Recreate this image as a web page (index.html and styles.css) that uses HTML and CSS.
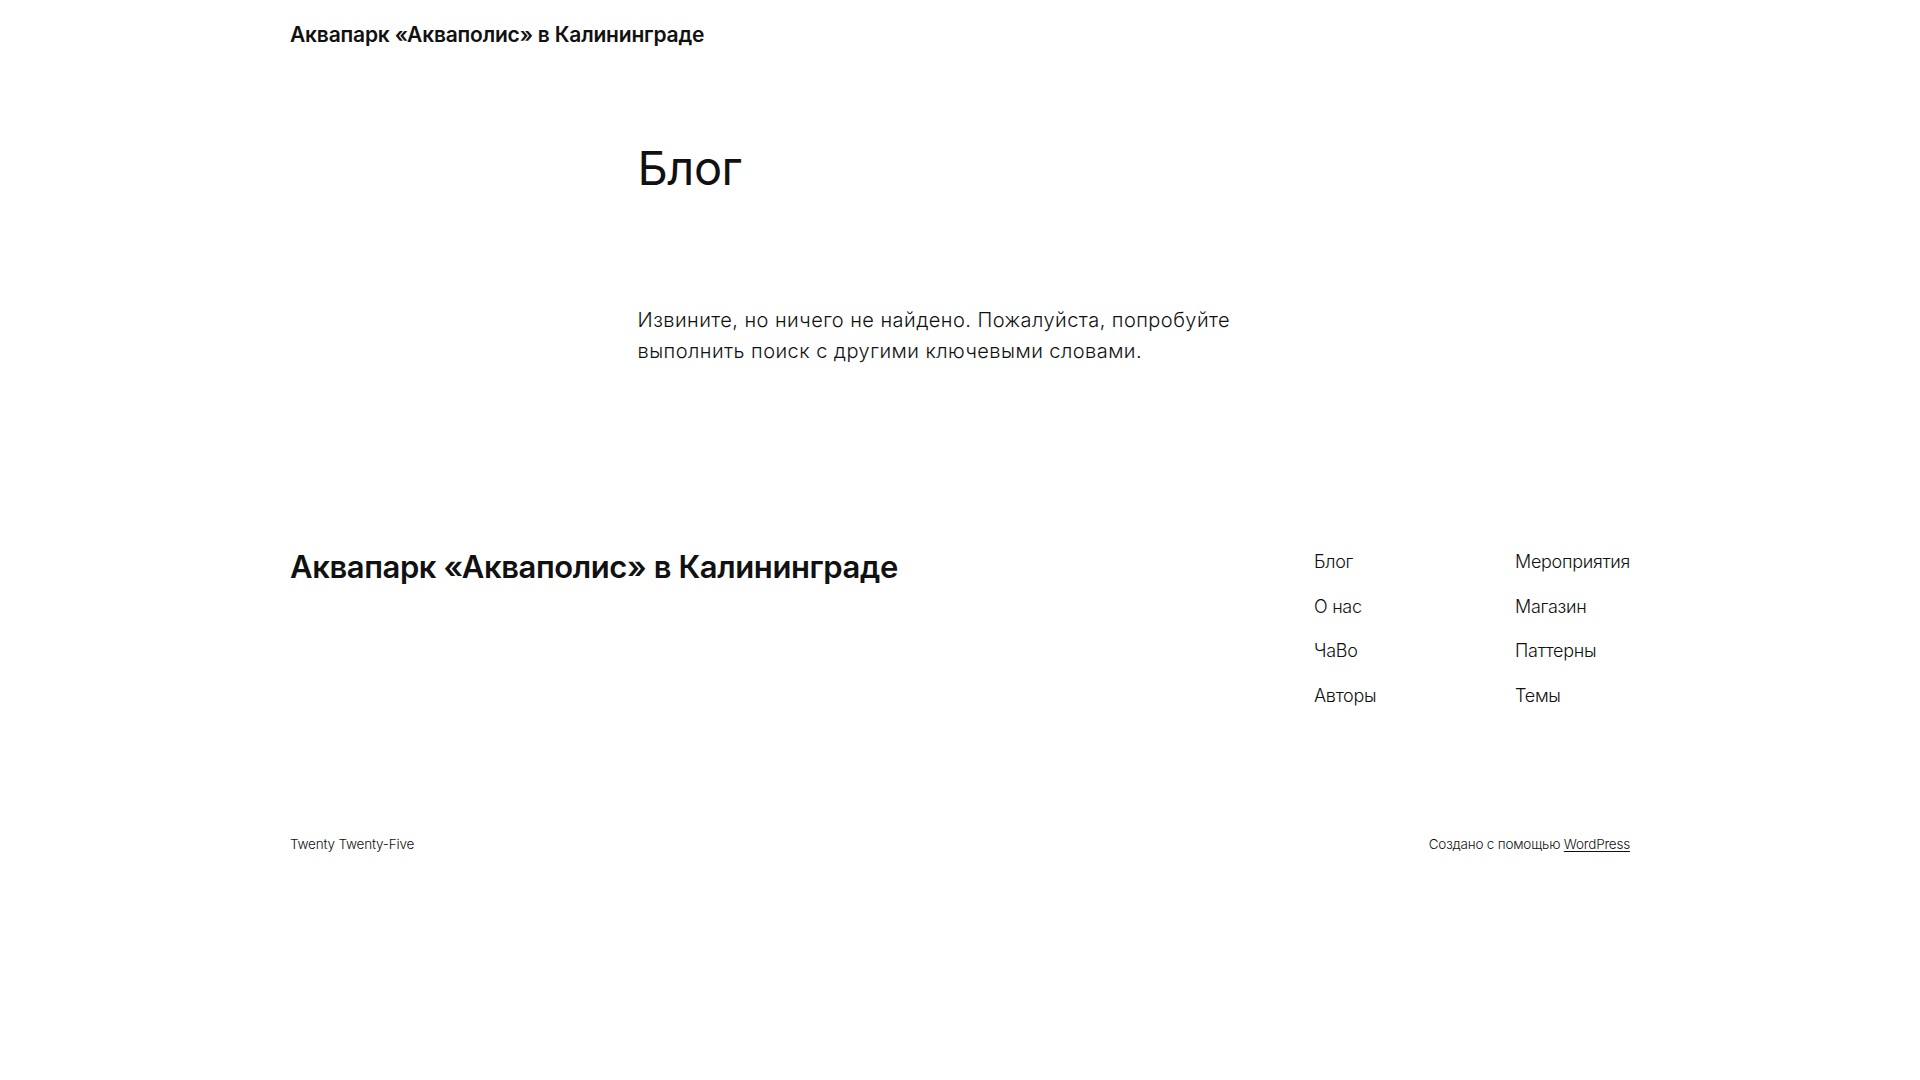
FILE: index.html
```html
<!DOCTYPE html>
<html lang="ru">
<head>
<meta charset="utf-8">
<title>Блог – Аквапарк «Акваполис» в Калининграде</title>
<link rel="stylesheet" href="styles.css">
</head>
<body>
<header class="site-header">
  <div class="wide">
    <a class="site-title" href="#">Аквапарк «Акваполис» в Калининграде</a>
  </div>
</header>
<main class="main">
  <div class="content">
    <h1 class="page-title">Блог</h1>
    <p class="no-results">Извините, но ничего не найдено. Пожалуйста, попробуйте выполнить поиск с другими ключевыми словами.</p>
  </div>
</main>
<footer class="site-footer">
  <div class="wide footer-top">
    <a class="footer-title" href="#">Аквапарк «Акваполис» в Калининграде</a>
    <nav class="footer-nav">
      <ul class="nav-col nav-col-first">
        <li><a href="#">Блог</a></li>
        <li><a href="#">О нас</a></li>
        <li><a href="#">ЧаВо</a></li>
        <li><a href="#">Авторы</a></li>
      </ul>
      <ul class="nav-col">
        <li><a href="#">Мероприятия</a></li>
        <li><a href="#">Магазин</a></li>
        <li><a href="#">Паттерны</a></li>
        <li><a href="#">Темы</a></li>
      </ul>
    </nav>
  </div>
  <div class="wide footer-bottom">
    <span>Twenty Twenty-Five</span>
    <span>Создано с помощью <a class="wp-link" href="#">WordPress</a></span>
  </div>
</footer>
</body>
</html>
```
FILE: styles.css
```css
* { box-sizing: border-box; }
html, body { margin: 0; padding: 0; background: #ffffff; }
body {
  font-family: Inter, "Noto Sans", sans-serif;
  color: #111111;
  font-weight: 300;
  -webkit-font-smoothing: antialiased;
}
a { color: inherit; text-decoration: none; }

.wide {
  width: 1340px;
  margin: 0 auto;
}

.site-header {
  height: 68px;
  padding-top: 2px;
  display: flex;
  align-items: center;
}
.site-header .wide { display: flex; }
.site-title {
  font-size: 21px;
  font-weight: 600;
  letter-spacing: -0.2px;
  line-height: 1.2;
}

.main { padding-top: 71px; }
.content {
  width: 645px;
  margin: 0 auto;
}
.page-title {
  margin: 0;
  font-size: 47px;
  font-weight: 400;
  line-height: 58px;
  letter-spacing: -0.5px;
}
.no-results {
  margin: 108px 0 0;
  font-size: 20px;
  line-height: 31px;
  letter-spacing: 0.45px;
  font-weight: 300;
}

.site-footer { padding-top: 182px; }
.footer-top {
  display: flex;
  justify-content: space-between;
  align-items: flex-start;
}
.footer-title {
  font-size: 31px;
  font-weight: 600;
  line-height: 36px;
  letter-spacing: -0.4px;
}
.footer-nav {
  display: flex;
  margin-top: -1px;
}
.nav-col {
  list-style: none;
  margin: 0;
  padding: 0;
  display: flex;
  flex-direction: column;
  gap: 17.5px;
}
.nav-col-first { width: 201px; }
.nav-col li {
  font-size: 18px;
  line-height: 27px;
  letter-spacing: -0.3px;
  font-weight: 300;
}

.footer-bottom {
  display: flex;
  justify-content: space-between;
  margin-top: 124px;
  font-size: 13.5px;
  line-height: 22px;
  letter-spacing: -0.2px;
  font-weight: 300;
}
.wp-link { text-decoration: underline; text-underline-offset: 2px; }
```
